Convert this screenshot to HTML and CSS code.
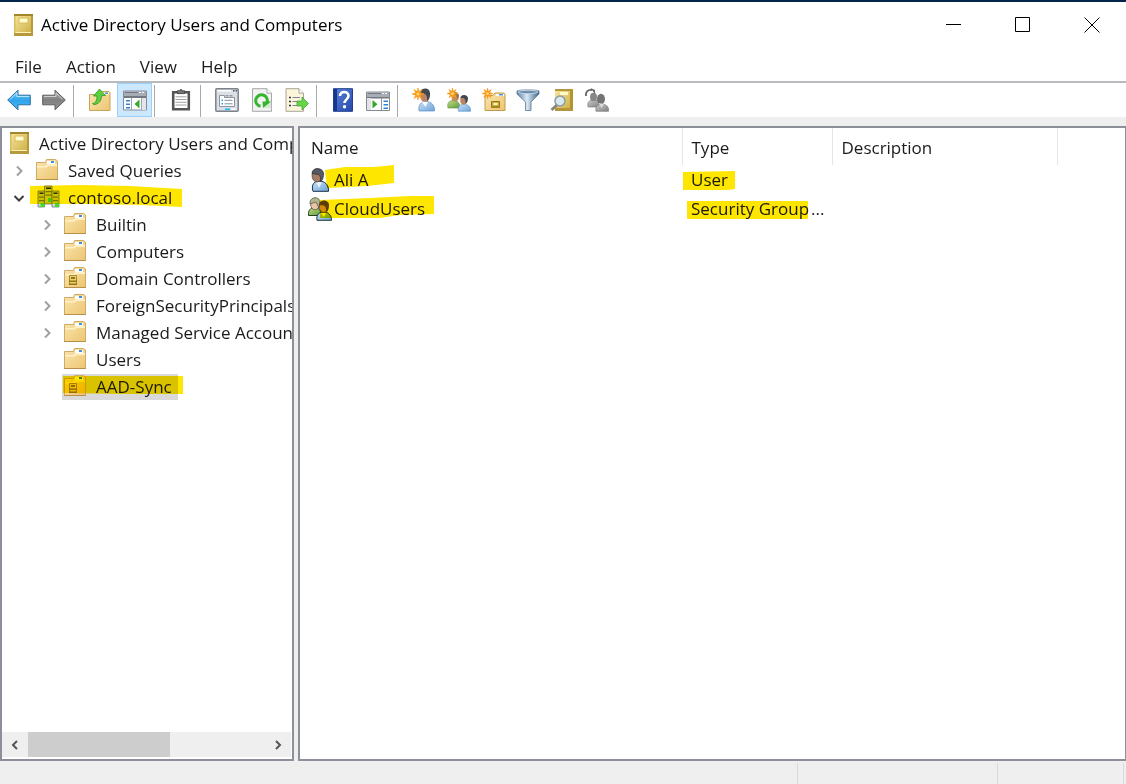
FILE: index.html
```html
<!DOCTYPE html>
<html lang="en">
<head>
<meta charset="utf-8">
<title>Active Directory Users and Computers</title>
<link rel="stylesheet" href="styles.css">
</head>
<body>
<svg class="sprite" aria-hidden="true">
  <defs>
    <linearGradient id="gold" x1="0" x2="1" y1="0" y2="1"><stop offset="0" stop-color="#f7e9a0"/><stop offset="1" stop-color="#c9a93c"/></linearGradient>
    <linearGradient id="manila" x1="0" x2="1" y1="0" y2="1"><stop offset="0" stop-color="#fbe6ae"/><stop offset="1" stop-color="#ecc572"/></linearGradient>
    <linearGradient id="sky" x1="0" x2="0" y1="0" y2="1"><stop offset="0" stop-color="#7fd0f8"/><stop offset=".5" stop-color="#2fa4ec"/><stop offset="1" stop-color="#4ab6f4"/></linearGradient>
    <linearGradient id="steel" x1="0" x2="0" y1="0" y2="1"><stop offset="0" stop-color="#b0b0b0"/><stop offset=".5" stop-color="#808080"/><stop offset="1" stop-color="#969696"/></linearGradient>
    <linearGradient id="shirt" x1="0" x2="1" y1="0" y2="1"><stop offset="0" stop-color="#c8e2fa"/><stop offset="1" stop-color="#6fa3d8"/></linearGradient>
    <linearGradient id="leaf" x1="0" x2="1" y1="0" y2="1"><stop offset="0" stop-color="#c3dd8b"/><stop offset="1" stop-color="#5c9a34"/></linearGradient>
    <linearGradient id="navy" x1="0" x2="1" y1="0" y2="1"><stop offset="0" stop-color="#5b86dd"/><stop offset="1" stop-color="#2447a8"/></linearGradient>
    <linearGradient id="funnel" x1="0" x2="1" y1="0" y2="0"><stop offset="0" stop-color="#5b81a6"/><stop offset=".45" stop-color="#dbe9f5"/><stop offset="1" stop-color="#3f6489"/></linearGradient>
    <linearGradient id="silver" x1="0" x2="1" y1="0" y2="1"><stop offset="0" stop-color="#c9c9c9"/><stop offset="1" stop-color="#828282"/></linearGradient>
  </defs>
  <symbol id="i-book" viewBox="0 0 24 24">
    <rect x="2" y="1" width="19" height="22" fill="url(#gold)"/>
    <path d="M2 1h19v2H2z" fill="#a3852d"/><path d="M2 20h19v3H2z" fill="#b8983c"/><path d="M2 19h19v1H2z" fill="#fff3b6"/>
    <path d="M19 3h2v17h-2z" fill="#b99a3b"/><path d="M2 3h1.500v17H2z" fill="#d9bd5c"/>
    <rect x="7" y="5" width="9" height="5" fill="#fffbd0" stroke="#d8bc58"/>
  </symbol>
  <symbol id="i-folder" viewBox="0 0 24 24">
    <path d="M.5 4.500h9l1-3h9l2 1.500v18.500H.5z" fill="url(#manila)" stroke="#cfab66"/>
    <path d="M11 3h8v3h-8z" fill="#fff"/><path d="M15 3h3v2h-3z" fill="#3d8fe0"/>
    <path d="M1 8h8l3-2h9v2h-8.500L10.500 9.500H1z" fill="#fff0c8"/><path d="M0 21h22v1H0z" fill="#b68f48"/>
  </symbol>
  <symbol id="i-ou" viewBox="0 0 24 24">
    <use href="#i-folder"/>
    <path d="M5.500 9.500h7v9h-7z" fill="#ecd269" stroke="#a98a2c"/><path d="M5 14.500h8v1.500H5zM5 17.500h8V19H5z" fill="#957518"/><path d="M7 11h4v2H7z" fill="#8d7622"/>
  </symbol>
  <symbol id="i-domain" viewBox="0 0 24 24">
    <g stroke="#6d7780" stroke-width=".8">
      <path d="M8.500 1h7.500v18H8.500z" fill="#d0d9df"/><path d="M2 6h6.500v16H2zM16 6h7v16h-7z" fill="#ccd6dc"/>
    </g>
    <path d="M10 2.500h5v1.500h-5zM3.500 7.500h4V9h-4zM17.500 7.500h4V9h-4z" fill="#29323c"/>
    <path d="M9.500 6h6v1.200h-6zM9.500 9.500h6v1.200h-6zM3 11.500h5v1.200H3zM17 11.500h5v1.200h-5zM3 15h5v1.200H3zM17 15h5v1.200h-5z" fill="#74848d"/>
    <path d="M12 13h3v4h-3zM4.500 18h4v4h-4zM19 18h4v4h-4z" fill="#42df28"/>
  </symbol>
  <symbol id="i-back" viewBox="0 0 24 24"><path d="M.7 12 11 2.200v5h12.300v9.600H11v5z" fill="url(#sky)" stroke="#2d6f9e"/><path d="m2.800 11.500 7-6.700v3.700h12.500" fill="none" stroke="#b5e5ff"/></symbol>
  <symbol id="i-forward" viewBox="0 0 24 24"><path d="M23.300 12 13 2.200v5H.7v9.600H13v5z" fill="url(#steel)" stroke="#5e5e5e"/><path d="M2 8.500h12V5l6.500 6.200" fill="none" stroke="#cfcfcf"/></symbol>
  <symbol id="i-up" viewBox="0 0 24 24">
    <path d="M1.500 6.500h9l2-3H21l1 1v18H1.500z" fill="url(#manila)" stroke="#c9a35a"/><path d="M14 4.500h7v2h-7z" fill="#fff"/><path d="M17 4.500h3V6h-3z" fill="#4c93d8"/>
    <path d="M4.500 15.500c3.500-.5 4.500-3.500 4.500-7.500H5.500l6-7 6 6.500-4 .2c.2 5-3 8.500-7.500 9z" fill="#5cd03e" stroke="#36902a" stroke-width=".8"/>
  </symbol>
  <symbol id="i-tree" viewBox="0 0 24 24">
    <path d="M.5 3h23v19H.5z" fill="#fff" stroke="#858a93"/><path d="M1 3h22v5H1z" fill="#a7acb5"/><path d="M2 4h13v1H2zM1 8h22v2H1z" fill="#737984"/><path d="M16 4h2v1h-2zM19 4h2v1h-2z" fill="#fff"/>
    <path d="M8 10h1v12H8zM18 10h1v12h-1z" fill="#a0a5ae"/><path d="M19 10h4v12h-4z" fill="#e2e5ea"/>
    <path d="M3 12h4v1.500H3zM3 15.500h4V17H3zM3 19h4v1.500H3z" fill="#2e83d5"/><path d="M16.500 11.500v9l-5-4.500z" fill="#31a92a"/>
  </symbol>
  <symbol id="i-clip" viewBox="0 0 24 24"><path d="M3.500 3.500h17v18.500h-17z" fill="#fff" stroke="#555" stroke-width="2.800"/><path d="M8 5V2h2.500c0-1.800 3-1.800 3 0H16v3z" fill="#777" stroke="#444"/><path d="M6 8.500h12M6 11.500h12M6 14.500h12M6 17.500h12" stroke="#999"/></symbol>
  <symbol id="i-props" viewBox="0 0 24 24"><rect x=".8" y=".8" width="22.400" height="22.400" rx="1" fill="#dce0e5" stroke="#7b828b" stroke-width="1.500"/><path d="M2 2h14v1.500H2z" fill="#fff"/><path d="M18 2h1.500v1.500H18zM20.500 2H22v1.500h-1.500z" fill="#465568"/><path d="M4.500 7.500h5v2h10v9h-15z" fill="#fff" stroke="#8d949e"/><path d="M10.500 7h3v1.500h-3zM14.500 7h3v1.500h-3z" fill="#929ba5"/><path d="M6.500 11.500H8V13H6.500zM6.500 15H8v1.500H6.500z" fill="#26a0f0"/><path d="M9.500 12.300h8M9.500 15.800h8" stroke="#878f99"/><path d="M10 20.500h5V22h-5z" fill="#18bdf5"/><path d="M16.500 20.500h4V22h-4z" fill="#fff"/></symbol>
  <symbol id="i-refresh" viewBox="0 0 24 24"><path d="M2.500.7H17l4.500 4.500v18.100h-19z" fill="#f1f2f1" stroke="#a5a8aa"/><path d="M17 .7v4.500h4.500" fill="#fff" stroke="#a5a8aa"/><path d="M10.500 18.300A5.800 5.800 0 1 1 17 14.500" fill="none" stroke="#35b42d" stroke-width="3"/><path d="M12.500 13.500H21V20h-8z" fill="#35b42d"/><path d="m12.500 20.300 8.700-6.800V22z" fill="#f1f2f1" opacity=".85"/></symbol>
  <symbol id="i-export" viewBox="0 0 24 24"><path d="M1 .7h13l4.500 4.500v18.100H1z" fill="#fbf5dc" stroke="#a9a594"/><path d="M14 .7v4.500h4.500" fill="#fff" stroke="#a9a594"/><path d="M4 9.500h2M4 13.500h2M4 17.500h2" stroke="#333" stroke-width="1.500"/><path d="M7.500 9.500H15M7.500 13.500H14M7.500 17.500H14" stroke="#8380a0"/><path d="M12 13h5V9l6.500 6.500L17 22v-4h-5z" fill="#68d447" stroke="#3b9e2d" stroke-width=".7"/></symbol>
  <symbol id="i-help" viewBox="0 0 24 24"><path d="M2.500.7h19v22.600h-19z" fill="url(#navy)" stroke="#223f90"/><path d="M3 1h3v22H3z" fill="#17378f"/><path d="M9 8c0-5.500 8.500-5 8.500-.2 0 3.500-4 3.600-4 7.200" fill="none" stroke="#fff" stroke-width="2.600"/><circle cx="13.500" cy="18.800" r="1.700" fill="#fff"/></symbol>
  <symbol id="i-console" viewBox="0 0 24 24"><path d="M.5 4h23v18.500H.5z" fill="#fff" stroke="#858a93"/><path d="M1 4h22v5H1z" fill="#a7acb5"/><path d="M2 5h13v1H2zM1 9h22v1.500H1z" fill="#737984"/><path d="M16 5h2v1h-2zM19 5h2v1h-2z" fill="#fff"/><path d="M15 10h1v12h-1z" fill="#8f949d"/><path d="M1 10h4v12H1z" fill="#e1e3e7"/><path d="M17.500 12.500H22V14h-4.500zM17.500 16H22v1.500h-4.500zM17.500 19.500H22V21h-4.500z" fill="#2e83d5"/><path d="M6.500 12v8.500l5-4.200z" fill="#31a92a"/></symbol>
  <symbol id="i-spark" viewBox="0 0 12 12"><path d="m6 0 .9 3.600L10 1.500 8.300 4.800 12 6 8.300 7.200 10 10.500 6.900 8.400 6 12l-.9-3.600L2 10.500l1.700-3.300L0 6l3.700-1.200L2 1.500l3.100 2.100z" fill="#f79a1c" stroke="#f79a1c" stroke-width=".6"/><circle cx="6" cy="6" r="1.500" fill="#ffd76a"/></symbol>
  <symbol id="i-newuser" viewBox="0 0 24 24"><path d="M7 23c-1-6 2-9.500 7-9.500 5.500 0 9 4 8.500 9.500z" fill="url(#shirt)" stroke="#5c8fc6" stroke-width=".7"/><path d="m10 14 3.500 5 2.500-5z" fill="#fff"/><ellipse cx="12.500" cy="7.500" rx="4.500" ry="6.300" fill="#bc8463"/><path d="M8 4.500c1-5 9.500-6 10 .5.300 4-.7 7-3 8.500.3-4 0-6-2-7.500z" fill="#424850"/><use href="#i-spark" width="12" height="12"/></symbol>
  <symbol id="i-newgroup" viewBox="0 0 24 24"><path d="M1 20c-1-5 1-7.500 5.500-7.500s6.500 3 6.500 7.500z" fill="url(#leaf)" stroke="#588a35" stroke-width=".6"/><ellipse cx="8" cy="9" rx="3.500" ry="4.500" fill="#c48b5d"/><path d="M5 6c1-3 7-3 7 2l-1 4-2-5z" fill="#8d7a4c"/><path d="M11.500 23.300c-1-4.500 1-7 5.500-7s7 3 6.500 7z" fill="url(#shirt)" stroke="#5c8fc6" stroke-width=".6"/><ellipse cx="16.500" cy="12" rx="3.300" ry="4.500" fill="#bc8463"/><path d="M13.500 10c0-4 7-4 7.500 0 0 3-1 5-2.500 6 .2-3 0-5-2-6z" fill="#424850"/><use href="#i-spark" width="11" height="11"/></symbol>
  <symbol id="i-newou" viewBox="0 0 24 24"><path d="M3 7.500h8l2-2.500h9l1 1.500v16H3z" fill="url(#manila)" stroke="#c39a4c"/><path d="M14 6h8v2h-8z" fill="#fff"/><path d="M17 6h4v1.500h-4z" fill="#4d93dc"/><path d="M9.500 13.500h8v6h-8z" fill="#c9ae40" stroke="#947516"/><path d="M11.500 15h4v2h-4z" fill="#fff6b5"/><path d="M9 18h9v2H9z" fill="#a48421"/><use href="#i-spark" width="11" height="11"/></symbol>
  <symbol id="i-filter" viewBox="0 0 24 24"><path d="M1 3c3-1.500 19-1.500 22 0v3l-8 8v8.500H9.500V14L1 6z" fill="url(#funnel)" stroke="#5c7690" stroke-width=".8"/><ellipse cx="12" cy="4" rx="10" ry="1.700" fill="#6b8cad" stroke="#dfeaf5" stroke-width=".7"/></symbol>
  <symbol id="i-find" viewBox="0 0 24 24"><path d="M5 1h18v22H5z" fill="url(#gold)"/><path d="M5 1h18v2H5zM5 20h18v3H5z" fill="#b5963a"/><path d="M20 3h3v17h-3z" fill="#b3942f"/><path d="M10 4h8v3h-8z" fill="#fffac8"/><path d="m1.500 22 6-5.500" stroke="#8a857b" stroke-width="3"/><circle cx="10" cy="13" r="5" fill="#d7ecfa" fill-opacity=".9" stroke="#8b9aa5" stroke-width="1.500"/></symbol>
  <symbol id="i-members" viewBox="0 0 24 24"><path d="M3 19c-1-5 1-7 6-7s6 3 6 7z" fill="url(#silver)" stroke="#757575" stroke-width=".6"/><ellipse cx="8.500" cy="9" rx="3.500" ry="4.300" fill="#888"/><path d="M11 23.300c-1-4.500 1-7 6-7s7 3 6.500 7z" fill="url(#silver)" stroke="#6d6d6d" stroke-width=".6"/><ellipse cx="16" cy="11" rx="4" ry="5.300" fill="#747474"/><path d="m13.500 15 3 5 2.500-4z" fill="#ddd"/><path d="M1 8C.5 4 2.500 1.500 7 2" fill="none" stroke="#666" stroke-width="1.800"/><path d="m5.500 0 4.500 2v4z" fill="#666"/></symbol>
  <symbol id="i-user" viewBox="0 0 24 24"><path d="M5 23.300C3 17 6 13 11 13c6 0 10 4 9.500 10.300z" fill="url(#shirt)" stroke="#1c2f45"/><path d="m8 14 3 6 3-6z" fill="#e8f3fd"/><ellipse cx="9" cy="7.500" rx="5" ry="6.500" fill="#a67c65" stroke="#33302f" stroke-width=".6"/><path d="M4 5.500C4-1 14.500-1 15.500 5c.3 4-1 7.500-3 9 .3-4 0-6-2-7.500z" fill="#545962" stroke="#20242a" stroke-width=".6"/></symbol>
  <symbol id="i-group" viewBox="0 0 24 24"><path d="M.5 18.500c-.5-5 2-8 6-8s7 3 7 8z" fill="url(#leaf)" stroke="#26401c"/><ellipse cx="7" cy="7" rx="4.500" ry="5.800" fill="#e8c5a5" stroke="#443325" stroke-width=".6"/><path d="M2 7C1-1 12-1 12 5l-1 6-3-6z" fill="#b3b58d" stroke="#3f3d2a" stroke-width=".6"/><path d="M9 23.300C8 18 11 15 15.500 15c5 0 8 3 8 8.300z" fill="url(#shirt)" stroke="#1c3a2c"/><ellipse cx="15.500" cy="10" rx="4.200" ry="5.500" fill="#d39a68" stroke="#3d2c20" stroke-width=".6"/><path d="M11 8c0-6 10-6 10 0 0 4-1 6-3 7.500.3-4 0-6-2-7z" fill="#5e4424"/><path d="m13 16 3 4 2-4z" fill="#fff"/></symbol>
  <symbol id="i-closed" viewBox="0 0 12 12"><path d="m4 1.500 4.500 4.500L4 10.500" fill="none" stroke="#a0a0a0" stroke-width="2"/></symbol>
  <symbol id="i-open" viewBox="0 0 12 12"><path d="m1.500 4 4.500 4.500L10.500 4" fill="none" stroke="#3c3c3c" stroke-width="2"/></symbol>
</svg>

<div class="window">
  <header class="titlebar">
    <svg class="icon"><use href="#i-book"/></svg>
    <h1 class="title">Active Directory Users and Computers</h1>
    <div class="caption">
      <button class="caption-button" aria-label="Minimize"><svg class="glyph" viewBox="0 0 16 16"><path d="M0 7.500h15"/></svg></button>
      <button class="caption-button" aria-label="Maximize"><svg class="glyph" viewBox="0 0 16 16"><path d="M.5.5h14v14H.5z"/></svg></button>
      <button class="caption-button" aria-label="Close"><svg class="glyph" viewBox="0 0 16 16"><path d="m.5.5 15 15m0-15-15 15"/></svg></button>
    </div>
  </header>
  <nav class="menubar">
    <button class="menu">File</button><button class="menu">Action</button><button class="menu">View</button><button class="menu">Help</button>
  </nav>
  <div class="toolbar" role="toolbar" aria-label="Standard">
    <button class="tool" aria-label="Back"><svg class="icon"><use href="#i-back"/></svg></button>
    <button class="tool" aria-label="Forward"><svg class="icon"><use href="#i-forward"/></svg></button>
    <span class="divider"></span>
    <button class="tool" aria-label="Up one level"><svg class="icon"><use href="#i-up"/></svg></button>
    <button class="tool tool-on" aria-label="Show console tree" aria-pressed="true"><svg class="icon"><use href="#i-tree"/></svg></button>
    <span class="divider"></span>
    <button class="tool" aria-label="Paste"><svg class="icon icon-small"><use href="#i-clip"/></svg></button>
    <span class="divider"></span>
    <button class="tool" aria-label="Properties"><svg class="icon"><use href="#i-props"/></svg></button>
    <button class="tool" aria-label="Refresh"><svg class="icon"><use href="#i-refresh"/></svg></button>
    <button class="tool" aria-label="Export list"><svg class="icon"><use href="#i-export"/></svg></button>
    <span class="divider"></span>
    <button class="tool" aria-label="Help"><svg class="icon"><use href="#i-help"/></svg></button>
    <button class="tool" aria-label="Show action pane"><svg class="icon"><use href="#i-console"/></svg></button>
    <span class="divider"></span>
    <button class="tool" aria-label="New user"><svg class="icon"><use href="#i-newuser"/></svg></button>
    <button class="tool" aria-label="New group"><svg class="icon"><use href="#i-newgroup"/></svg></button>
    <button class="tool" aria-label="New organizational unit"><svg class="icon"><use href="#i-newou"/></svg></button>
    <button class="tool tool-narrow" aria-label="Filter"><svg class="icon"><use href="#i-filter"/></svg></button>
    <button class="tool" aria-label="Find"><svg class="icon"><use href="#i-find"/></svg></button>
    <button class="tool" aria-label="Add to group"><svg class="icon"><use href="#i-members"/></svg></button>
  </div>

  <main class="panes">
    <section class="pane tree-pane" aria-label="Console tree">
      <ul class="tree">
        <li class="node root"><svg class="icon"><use href="#i-book"/></svg><span class="label">Active Directory Users and Comp</span></li>
        <li class="node"><button class="twisty" aria-label="Expand"><svg class="chevron"><use href="#i-closed"/></svg></button><svg class="icon"><use href="#i-folder"/></svg><span class="label">Saved Queries</span></li>
        <li class="node"><button class="twisty" aria-label="Collapse"><svg class="chevron"><use href="#i-open"/></svg></button><svg class="icon"><use href="#i-domain"/></svg><span class="label">contoso.local</span>
          <svg class="marker marker-domain" viewBox="0 0 152 22" preserveAspectRatio="none"><path d="M0 1 50 0 100 1 152 4V22L112 20 60 19H0z"/></svg></li>
        <li class="node deep"><button class="twisty" aria-label="Expand"><svg class="chevron"><use href="#i-closed"/></svg></button><svg class="icon"><use href="#i-folder"/></svg><span class="label">Builtin</span></li>
        <li class="node deep"><button class="twisty" aria-label="Expand"><svg class="chevron"><use href="#i-closed"/></svg></button><svg class="icon"><use href="#i-folder"/></svg><span class="label">Computers</span></li>
        <li class="node deep"><button class="twisty" aria-label="Expand"><svg class="chevron"><use href="#i-closed"/></svg></button><svg class="icon"><use href="#i-ou"/></svg><span class="label">Domain Controllers</span></li>
        <li class="node deep"><button class="twisty" aria-label="Expand"><svg class="chevron"><use href="#i-closed"/></svg></button><svg class="icon"><use href="#i-folder"/></svg><span class="label">ForeignSecurityPrincipals</span></li>
        <li class="node deep"><button class="twisty" aria-label="Expand"><svg class="chevron"><use href="#i-closed"/></svg></button><svg class="icon"><use href="#i-folder"/></svg><span class="label">Managed Service Accoun</span></li>
        <li class="node deep"><span class="twisty"></span><svg class="icon"><use href="#i-folder"/></svg><span class="label">Users</span></li>
        <li class="node deep"><span class="twisty"></span><span class="selected"><svg class="icon"><use href="#i-ou"/></svg><span class="label">AAD-Sync</span></span>
          <svg class="marker marker-sync" viewBox="0 0 120 18" preserveAspectRatio="none"><path d="M0 0H120V18H60L0 17z"/></svg></li>
      </ul>
      <div class="scrollbar">
        <button class="scroll-button" aria-label="Scroll left"><svg class="arrow" viewBox="0 0 12 12"><path d="M8 2 4 6l4 4"/></svg></button>
        <div class="track"><div class="thumb"></div></div>
        <button class="scroll-button" aria-label="Scroll right"><svg class="arrow" viewBox="0 0 12 12"><path d="m4 2 4 4-4 4"/></svg></button>
      </div>
    </section>
    <section class="pane list-pane" aria-label="Objects">
      <table class="list">
        <colgroup><col class="col-name"><col class="col-type"><col class="col-description"><col></colgroup>
        <thead><tr><th>Name</th><th>Type</th><th>Description</th><td></td></tr></thead>
        <tbody>
          <tr>
            <td class="name-cell"><span class="object"><svg class="icon"><use href="#i-user"/></svg>Ali A<svg class="marker marker-ali" viewBox="0 0 69 23" preserveAspectRatio="none"><path d="M0 5 20 2 50 2 69 0V18L42 21 2 23z"/></svg></span></td>
            <td><span class="object">User<svg class="marker marker-user" viewBox="0 0 52 19" preserveAspectRatio="none"><path d="M0 1 52 0V18L45 19H0z"/></svg></span></td><td></td><td></td>
          </tr>
          <tr>
            <td class="name-cell"><span class="object"><svg class="icon"><use href="#i-group"/></svg>CloudUsers<svg class="marker marker-cloud" viewBox="0 0 114 22" preserveAspectRatio="none"><path d="M0 4 50 2 90 0H114V18L80 19 60 22H0z"/></svg></span></td>
            <td><span class="object"><span>Security Group</span> <span>...</span><svg class="marker marker-security" viewBox="0 0 121 18" preserveAspectRatio="none"><path d="M0 0H121V18H0z"/></svg></span></td><td></td><td></td>
          </tr>
        </tbody>
      </table>
    </section>
  </main>
  <footer class="statusbar"><span class="status status-main"></span><span class="status status-mid"></span><span class="status status-end"></span></footer>
</div>
</body>
</html>
```
FILE: styles.css
```css
* { box-sizing: border-box; }

body {
  margin: 0;
  font: 17px/24px "Open Sans", "Noto Sans", sans-serif;
  color: #1b1b1b;
}

button {
  display: flex;
  align-items: center;
  justify-content: center;
  padding: 0;
  border: 0;
  background: none;
  font: inherit;
  color: inherit;
}

ul { margin: 0; padding: 0; list-style: none; }
.sprite { position: absolute; width: 0; height: 0; }
.icon { flex: none; width: 24px; height: 24px; }
.icon-small { width: 22px; height: 22px; }

.window {
  display: flex;
  flex-direction: column;
  height: 100vh;
  border-top: 2px solid #03244a;
  background: #fff;
}

.titlebar { display: flex; align-items: center; height: 46px; padding-left: 12px; }
.title { flex: 1; margin: 0 0 0 5px; font-size: 17px; font-weight: 400; color: #000; }
.caption { display: flex; align-self: stretch; }
.caption-button { width: 69px; }
.glyph { width: 16px; height: 16px; fill: none; stroke: #000; }

.menubar { display: flex; gap: 24px; height: 35px; padding: 4px 15px 0; border-bottom: 2px solid #bababe; }

.toolbar { display: flex; height: 34px; padding-left: 1px; }
.tool { width: 35px; }
.tool-narrow { width: 33px; }
.tool-on { border: 1px solid #99d1ff; background: #cce8ff; }
.divider { width: 1px; margin: 2px 8px 0 2px; background: #a9a9a9; }

.panes {
  display: flex;
  flex: 1;
  gap: 4px;
  min-height: 0;
  padding-top: 9px;
  background: #efefef;
}

.pane { border: 2px solid #8d9098; background: #fff; overflow: hidden; }
.tree-pane { display: flex; flex: none; flex-direction: column; width: 294px; }
.list-pane { flex: 1; border-right-width: 1px; }

.tree { flex: 1; padding-top: 2px; overflow: hidden; }
.node { position: relative; display: flex; align-items: center; gap: 8px; height: 27px; padding-left: 6px; white-space: nowrap; }
.node .icon { margin-bottom: 2px; }
.root { gap: 7px; }
.deep { padding-left: 34px; }
.twisty { flex: none; width: 22px; margin: 0 -2px 0 0; }
.chevron { width: 12px; height: 12px; }
.selected { display: flex; align-items: center; gap: 8px; height: 26px; margin: 0 0 0 -2px; padding: 0 6px 0 2px; background: #d9d9d9; }

.marker { position: absolute; fill: #ffe600; mix-blend-mode: multiply; pointer-events: none; }
.marker-domain { left: 28px; top: 1px; width: 152px; height: 22px; }
.marker-sync { left: 61px; top: 3px; width: 120px; height: 18px; }
.marker-ali { left: 17px; top: -3px; width: 69px; height: 23px; }
.marker-cloud { left: 12px; top: -1px; width: 114px; height: 22px; }
.marker-user { left: -8px; top: 3px; width: 52px; height: 19px; }
.marker-security { left: -4px; top: 4px; width: 121px; height: 18px; }

.scrollbar { display: flex; height: 25px; margin: 0 1px 2px 0; background: #efefef; }
.scroll-button { width: 26px; }
.arrow { width: 12px; height: 12px; fill: none; stroke: #555; stroke-width: 2; }
.track { display: flex; flex: 1; }
.thumb { width: 60%; background: #cdcdcd; }

.list { width: 100%; border-collapse: collapse; table-layout: fixed; }
.col-name { width: 382px; }
.col-type { width: 150px; }
.col-description { width: 225px; }
.list th { height: 37px; padding: 2px 9px 0; border-right: 1px solid #e5e5e5; font-weight: 400; text-align: left; }
.list th:first-child { padding-left: 11px; }
.list td { height: 29px; padding: 0 0 0 9px; white-space: nowrap; }
.list .name-cell { padding-left: 8px; }
.object { position: relative; display: inline-flex; align-items: center; gap: 2px; vertical-align: middle; }

.statusbar { display: flex; height: 23px; padding: 2px 2px 0 0; background: #efefef; }
.status { border-right: 1px solid #d9d9d9; }
.status-main { flex: 1; }
.status-mid { width: 200px; }
.status-end { width: 126px; }
```
